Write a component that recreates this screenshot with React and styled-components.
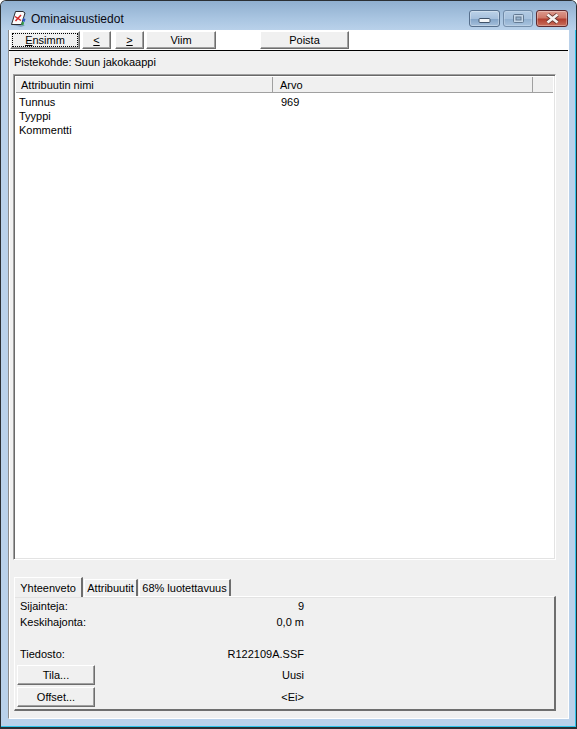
import React from 'react';
import styled, { createGlobalStyle } from 'styled-components';

const GlobalStyle = createGlobalStyle`
  html, body {
    margin: 0;
    padding: 0;
    background: #fff;
  }
  * {
    box-sizing: border-box;
  }
`;

const Win = styled.div`
  width: 577px;
  height: 729px;
  display: flex;
  flex-direction: column;
  overflow: hidden;
  border: 1px solid #2a2f33;
  border-bottom-width: 2px;
  border-radius: 6px 6px 0 0;
  background: #b9d1ea;
  box-shadow: inset -1px -1px 0 #2fc3ea;
  font-family: "Liberation Sans", Arial, sans-serif;
  font-size: 11px;
  color: #000;
`;

const TitleBar = styled.div`
  height: 29px;
  flex: none;
  display: flex;
  align-items: center;
  padding: 6px 8px 0 9px;
  background: linear-gradient(180deg, #8fafcf 0, #a9c5e1 60%, #b9d1ea 100%);
`;

const Title = styled.span`
  font-size: 12px;
  margin-left: 3px;
  color: #0a0a14;
  flex: 1;
`;

const CtlGroup = styled.div`
  display: flex;
  gap: 3px;
`;

const Ctl = styled.div`
  width: ${p => p.$w}px;
  height: 17px;
  display: flex;
  align-items: center;
  justify-content: center;
  border: 1px solid ${p => (p.$close ? '#5e2a30' : '#566f8c')};
  border-radius: 3px;
  background: ${p =>
    p.$close
      ? 'linear-gradient(180deg, #dc9a8e 0, #cf7868 45%, #b23f30 55%, #c9705e 100%)'
      : 'linear-gradient(180deg, #bcd2e8 0, #a6c0dc 50%, #84a5c8 55%, #a5bfdb 100%)'};
  box-shadow: inset 0 0 0 1px rgba(255, 255, 255, 0.3);
  opacity: ${p => (p.$dim ? 0.65 : 1)};
`;

const Client = styled.div`
  flex: 1;
  margin: 0 7px 8px 7px;
  display: flex;
  flex-direction: column;
  background: #f0f0f0;
  border-right: 1px solid #fff;
  border-bottom: 1px solid #fff;
  border-left: 1px solid #8c8c8c;
  box-shadow: inset 1px 0 0 #fff;
`;

const Toolbar = styled.div`
  height: 21px;
  flex: none;
  display: flex;
  align-items: flex-start;
  padding: 1px 0 0 1px;
  background: #fff;
  border-bottom: 1px solid #000;
`;

const ToolButton = styled.button`
  width: ${p => p.$w}px;
  margin-left: ${p => p.$gap || 0}px;
  height: 18px;
  padding: 0;
  font: inherit;
  color: #000;
  background: #f0f0f0;
  border: 1px solid;
  border-color: #fff #6e6e6e #6e6e6e #fff;
  box-shadow: inset -1px -1px 0 #a0a0a0;
  position: relative;
  display: flex;
  align-items: center;
  justify-content: center;
  line-height: 14px;
`;

const FocusRing = styled.span`
  position: absolute;
  inset: 1px;
  border: 1px dotted #000;
`;

const Body = styled.div`
  flex: 1;
  display: flex;
  flex-direction: column;
  padding: 0 12px 0 4px;
  min-height: 0;
`;

const PointLabel = styled.div`
  height: 23px;
  flex: none;
  padding: 5px 0 0 1px;
  line-height: 13px;
`;

const AttrList = styled.div`
  height: 486px;
  flex: none;
  display: flex;
  flex-direction: column;
  background: #fff;
  border: 1px solid;
  border-color: #a0a0a0 #fff #fff #a0a0a0;
  box-shadow: inset 1px 1px 0 #696969, inset -1px -1px 0 #e3e3e3;
  padding: 2px;
`;

const ListHead = styled.div`
  height: 16px;
  flex: none;
  display: flex;
  background: #f0f0f0;
  border-bottom: 1px solid #a0a0a0;
`;

const HeadCell = styled.div`
  width: ${p => p.$w}px;
  flex: ${p => (p.$fill ? 1 : 'none')};
  padding: 1px 0 0 ${p => p.$pad || 5}px;
  line-height: 14px;
  border-right: ${p => (p.$fill ? 'none' : '1px solid #a0a0a0')};
`;

const RowGroup = styled.div`
  padding-top: 2px;
`;

const Row = styled.div`
  height: 14px;
  display: flex;
  line-height: 14px;
`;

const NameCell = styled.div`
  width: 262px;
  padding-left: 3px;
`;

const ValueCell = styled.div`
  padding-left: 3px;
`;

const Tabs = styled.div`
  display: flex;
  align-items: flex-end;
  margin-top: 17px;
  height: 19px;
  flex: none;
  position: relative;
  z-index: 1;
  padding-left: 1px;
`;

const Tab = styled.div`
  width: ${p => p.$w}px;
  height: ${p => (p.$active ? 20 : 17)}px;
  margin-left: ${p => (p.$active ? 0 : 1)}px;
  margin-bottom: ${p => (p.$active ? -1 : 0)}px;
  display: flex;
  align-items: center;
  justify-content: center;
  background: #f0f0f0;
  border-top: 1px solid #fff;
  border-left: 1px solid #fff;
  border-right: 2px solid #6e6e6e;
  line-height: 14px;
`;

const Panel = styled.div`
  height: 115px;
  flex: none;
  margin-left: 1px;
  padding: 1px 3px 0 2px;
  background: #f0f0f0;
  border: 1px solid;
  border-color: #fff #6e6e6e #6e6e6e #fff;
  box-shadow: inset 0 1px 0 #e3e3e3;
  border-bottom-width: 2px;
  border-right-width: 2px;
`;

const InfoRow = styled.div`
  height: ${p => p.$h || 16}px;
  display: flex;
  align-items: center;
  margin-top: ${p => p.$top || 0}px;
  padding-left: ${p => (p.$hasButton ? 0 : 3)}px;
`;

const InfoLabel = styled.div`
  flex: 1;
`;

const InfoValue = styled.div`
  width: 120px;
  text-align: right;
  margin-right: 247px;
`;

const PanelButton = styled.button`
  width: 78px;
  height: 20px;
  padding: 0;
  font: inherit;
  color: #000;
  background: #f0f0f0;
  border: 1px solid;
  border-color: #fff #6e6e6e #6e6e6e #fff;
  box-shadow: inset -1px -1px 0 #a0a0a0;
  line-height: 14px;
`;

const Spacer = styled.div`
  flex: 1;
`;

const Underlined = styled.span`
  text-decoration: underline;
`;

const AppIcon = () => (
  <svg width="18" height="18" viewBox="0 0 18 18">
    <path d="M1 14.5l5-3 9 4-4 1.5z" fill="#6f8fb0" opacity="0.7" />
    <path d="M5.5 1.5h7.5l2 1.5-3.5 11.5H1.5z" fill="#fafafa" stroke="#2b2b33" strokeWidth="1" strokeLinejoin="round" />
    <path d="M5 6.5l6 4M11 5l-5.5 6" stroke="#d3262a" strokeWidth="1.5" />
    <path d="M13 8l2.5 1-1 3-2.2-1z" fill="#2c55c4" />
    <path d="M12.2 11.5l2 1-1 3-2-1z" fill="#2f9a45" />
  </svg>
);

const MinGlyph = () => (
  <svg width="13" height="15" viewBox="0 0 13 15">
    <rect x="1" y="7.5" width="11" height="4" rx="1" fill="#f4f6f8" stroke="#3f5269" />
  </svg>
);

const MaxGlyph = () => (
  <svg width="13" height="11" viewBox="0 0 13 11">
    <rect x="1.5" y="1.5" width="10" height="8" rx="1" fill="#d5e1ec" stroke="#3f5269" />
    <rect x="4" y="4" width="5" height="3" fill="#8ea8c3" stroke="#3f5269" />
  </svg>
);

const CloseGlyph = () => (
  <svg width="15" height="11" viewBox="0 0 15 11">
    <path d="M2.5 1.5l10 8M12.5 1.5l-10 8" stroke="#63342f" strokeWidth="4.2" />
    <path d="M2.5 1.5l10 8M12.5 1.5l-10 8" stroke="#f6f1ef" strokeWidth="2.8" />
  </svg>
);

export default function App() {
  return (
    <>
      <GlobalStyle />
      <Win>
        <TitleBar>
          <AppIcon />
          <Title>Ominaisuustiedot</Title>
          <CtlGroup>
            <Ctl $w={31}><MinGlyph /></Ctl>
            <Ctl $w={30} $dim><MaxGlyph /></Ctl>
            <Ctl $w={32} $close><CloseGlyph /></Ctl>
          </CtlGroup>
        </TitleBar>
        <Client>
          <Toolbar>
            <ToolButton $w={70}><FocusRing /><Underlined>E</Underlined>nsimm</ToolButton>
            <ToolButton $w={29} $gap={2}><Underlined>&lt;</Underlined></ToolButton>
            <ToolButton $w={29} $gap={4}><Underlined>&gt;</Underlined></ToolButton>
            <ToolButton $w={70} $gap={2}>Viim</ToolButton>
            <ToolButton $w={89} $gap={44}>Poista</ToolButton>
          </Toolbar>
          <Body>
            <PointLabel>Pistekohde: Suun jakokaappi</PointLabel>
            <AttrList>
              <ListHead>
                <HeadCell $w={257}>Attribuutin nimi</HeadCell>
                <HeadCell $w={260} $pad={7}>Arvo</HeadCell>
                <HeadCell $fill />
              </ListHead>
              <RowGroup>
                <Row><NameCell>Tunnus</NameCell><ValueCell>969</ValueCell></Row>
                <Row><NameCell>Tyyppi</NameCell></Row>
                <Row><NameCell>Kommentti</NameCell></Row>
              </RowGroup>
            </AttrList>
            <Tabs>
              <Tab $w={69} $active>Yhteenveto</Tab>
              <Tab $w={54}>Attribuutit</Tab>
              <Tab $w={92}>68% luotettavuus</Tab>
            </Tabs>
            <Panel>
              <InfoRow><InfoLabel>Sijainteja:</InfoLabel><InfoValue>9</InfoValue></InfoRow>
              <InfoRow><InfoLabel>Keskihajonta:</InfoLabel><InfoValue>0,0 m</InfoValue></InfoRow>
              <InfoRow $top={16}><InfoLabel>Tiedosto:</InfoLabel><InfoValue>R122109A.SSF</InfoValue></InfoRow>
              <InfoRow $h={20} $top={3} $hasButton><PanelButton>Tila...</PanelButton><Spacer /><InfoValue>Uusi</InfoValue></InfoRow>
              <InfoRow $h={20} $top={2} $hasButton><PanelButton>Offset...</PanelButton><Spacer /><InfoValue>&lt;Ei&gt;</InfoValue></InfoRow>
            </Panel>
          </Body>
        </Client>
      </Win>
    </>
  );
}
